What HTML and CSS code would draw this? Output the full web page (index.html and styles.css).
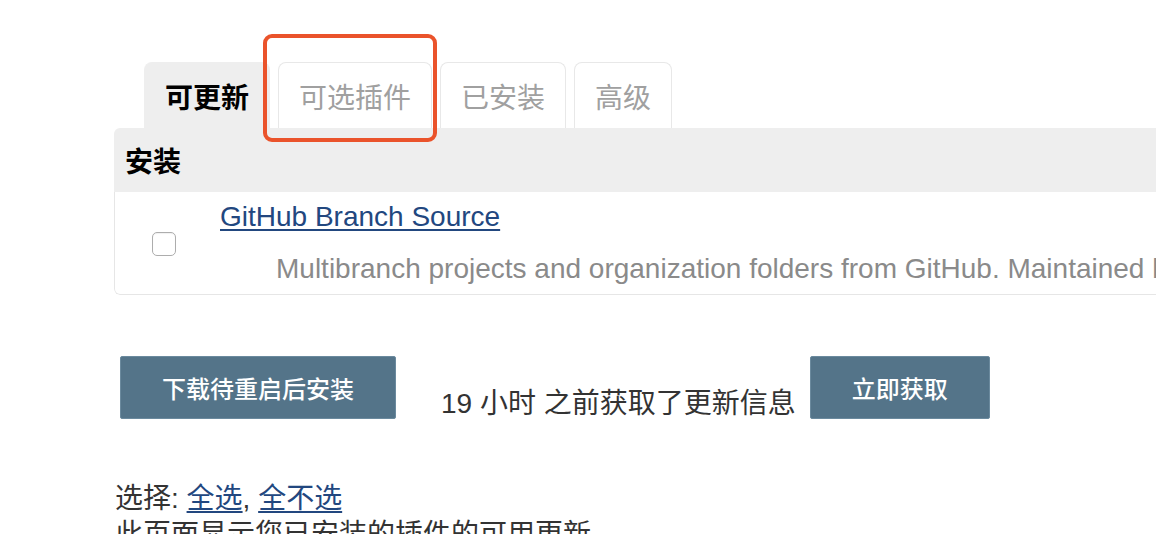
FILE: index.html
```html
<!DOCTYPE html>
<html lang="zh-CN">
<head>
<meta charset="utf-8">
<title>插件管理</title>
<link rel="stylesheet" href="styles.css">
</head>
<body>
<div class="page">
  <div class="tabs">
    <div class="tab tab-active">可更新</div>
    <div class="tab tab-marked">可选插件<span class="highlight"></span></div>
    <div class="tab">已安装</div>
    <div class="tab">高级</div>
  </div>
  <div class="table">
    <div class="table-head">安装</div>
    <div class="table-row">
      <div class="check-cell"><span class="checkbox"></span></div>
      <div class="info-cell">
        <a class="plugin-link" href="#">GitHub Branch Source</a>
        <div class="plugin-desc">Multibranch projects and organization folders from GitHub. Maintained by CloudBees, Inc.</div>
      </div>
    </div>
  </div>
  <div class="actions">
    <button class="btn btn-wide">下载待重启后安装</button>
    <span class="update-info">19 小时 之前获取了更新信息</span>
    <button class="btn">立即获取</button>
  </div>
  <div class="select-line">选择: <a href="#">全选</a>, <a href="#">全不选</a></div>
  <div class="note">此页面显示您已安装的插件的可用更新</div>
</div>
</body>
</html>
```

FILE: styles.css
```css
html, body {
  margin: 0;
  padding: 0;
  background: #fff;
  overflow: hidden;
}
body {
  width: 1156px;
  height: 534px;
  font-family: "Liberation Sans", "Noto Sans CJK SC", sans-serif;
  color: #333;
}
.page {
  padding-left: 114px;
}
.tabs {
  display: flex;
  gap: 8px;
  margin-top: 62px;
  padding-left: 30px;
  height: 66px;
}
.tab {
  position: relative;
  display: flex;
  align-items: center;
  padding: 1px 20px 0;
  font-size: 28px;
  color: #a0a0a0;
  border: 1px solid #e8e8e8;
  border-bottom: none;
  border-radius: 8px 8px 0 0;
  box-sizing: border-box;
  height: 66px;
  background: #fff;
}
.tab-active {
  background: #eeeeee;
  border-color: #eeeeee;
  color: #000;
  font-weight: bold;
  padding: 1px 20px 0;
}
.highlight {
  position: absolute;
  left: -16px;
  top: -29px;
  width: 174px;
  height: 108px;
  box-sizing: border-box;
  border: 4px solid #ea532b;
  border-radius: 9px;
}
.table {
  width: 1200px;
  border-radius: 6px 0 0 6px;
  overflow: hidden;
}
.table-head {
  background: #eeeeee;
  height: 64px;
  display: flex;
  align-items: center;
  padding-left: 11px;
  font-size: 28px;
  font-weight: bold;
  color: #000;
}
.table-row {
  display: flex;
  height: 103px;
  box-sizing: border-box;
  border: 1px solid #e6e6e6;
  border-top: none;
  border-radius: 0 0 0 6px;
}
.check-cell {
  flex: 0 0 105px;
  display: flex;
  align-items: center;
  padding-left: 37px;
  box-sizing: border-box;
}
.checkbox {
  display: block;
  width: 24px;
  height: 24px;
  box-sizing: border-box;
  border: 1px solid #adadad;
  border-radius: 5px;
  background: #fff;
  box-shadow: inset 0 1px 1px rgba(0,0,0,0.06);
  margin-top: 1px;
}
.info-cell {
  padding-top: 9px;
  white-space: nowrap;
}
.plugin-link {
  display: block;
  font-size: 28px;
  line-height: 32px;
  color: #22477f;
  text-decoration: underline;
  text-decoration-thickness: 2px;
  text-underline-offset: 3px;
}
.plugin-desc {
  margin-top: 20px;
  padding-left: 56px;
  font-size: 28px;
  line-height: 32px;
  color: #8a8a8a;
}
.actions {
  display: flex;
  align-items: flex-start;
  margin-top: 61px;
  padding-left: 6px;
}
.btn {
  height: 63px;
  padding: 0 41px;
  background: #547489;
  border: 1px solid #6b8a9e;
  border-radius: 2px;
  color: #fff;
  font-family: "Liberation Sans", "Noto Sans CJK SC", sans-serif;
  font-size: 24px;
  font-weight: 500;
  cursor: pointer;
}
.update-info {
  margin: 32px 14px 0 45px;
  font-size: 28px;
  line-height: 32px;
  color: #333;
}
.select-line, .note {
  font-size: 28px;
  line-height: 36px;
  color: #333;
}
.select-line {
  margin-top: 61px;
  padding-left: 1px;
}
.select-line a {
  color: #22477f;
  text-decoration: underline;
  text-decoration-thickness: 2px;
  text-underline-offset: 3px;
}
.note {
  padding-left: 1px;
}
```
